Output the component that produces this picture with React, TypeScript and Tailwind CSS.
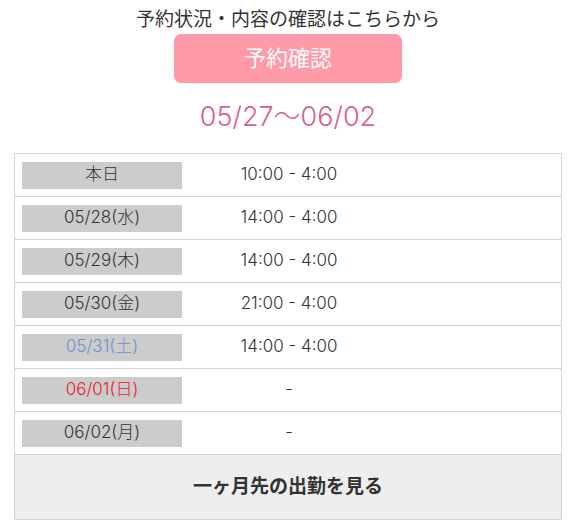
const rows = [
  { day: "本日", time: "10:00 - 4:00", color: "text-[#333333]" },
  { day: "05/28(水)", time: "14:00 - 4:00", color: "text-[#333333]" },
  { day: "05/29(木)", time: "14:00 - 4:00", color: "text-[#333333]" },
  { day: "05/30(金)", time: "21:00 - 4:00", color: "text-[#333333]" },
  { day: "05/31(土)", time: "14:00 - 4:00", color: "text-[#6a95cc]" },
  { day: "06/01(日)", time: "-", color: "text-[#e8202a]" },
  { day: "06/02(月)", time: "-", color: "text-[#333333]" },
];

export default function App() {
  return (
    <div className="w-[576px] h-[527px] bg-white text-[#333333] font-['Inter','Noto_Sans_CJK_JP',sans-serif] flex flex-col items-center">
      <p className="mt-[6px] text-[19px] leading-[27px]">予約状況・内容の確認はこちらから</p>
      <button className="mt-[1px] w-[228px] h-[49px] rounded-[7px] bg-[#ff9aa8] text-white text-[22px]">
        予約確認
      </button>
      <p className="mt-[18px] text-[27px] leading-[32px] font-light text-[#d9608a]">05/27〜06/02</p>

      <div className="mt-[20px] w-[548px] border border-[#d2d2d2]">
        {rows.map((r) => (
          <div key={r.day} className="h-[43px] flex items-center border-b border-[#d2d2d2]">
            <div className="ml-[7px] w-[160px] h-[27px] bg-[#cccccc] flex items-center justify-center">
              <span className={`text-[17px] font-light ${r.color}`}>{r.day}</span>
            </div>
            <div className="w-[214px] text-center text-[17px] font-light">{r.time}</div>
          </div>
        ))}
        <div className="h-[64px] bg-[#eeeeee] flex items-center justify-center">
          <span className="text-[19px] font-bold">一ヶ月先の出勤を見る</span>
        </div>
      </div>
    </div>
  );
}
